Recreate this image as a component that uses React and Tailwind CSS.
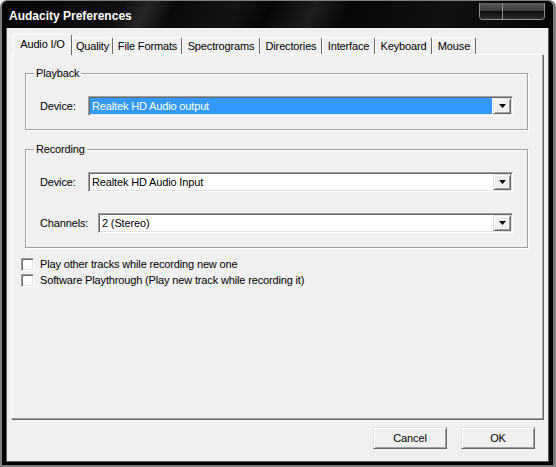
const tabs = [
  { label: 'Audio I/O', w: 'w-[59px]', active: true },
  { label: 'Quality', w: 'w-[41px]' },
  { label: 'File Formats', w: 'w-[69px]' },
  { label: 'Spectrograms', w: 'w-[78px]' },
  { label: 'Directories', w: 'w-[62px]' },
  { label: 'Interface', w: 'w-[53px]' },
  { label: 'Keyboard', w: 'w-[57px]' },
  { label: 'Mouse', w: 'w-[44px]' },
];

const sunken =
  'border border-t-[#a0a0a0] border-l-[#a0a0a0] border-r-white border-b-white shadow-[inset_1px_1px_0_#696969,inset_-1px_-1px_0_#e3e3e3]';
const raised =
  'border border-t-[#e3e3e3] border-l-[#e3e3e3] border-r-[#696969] border-b-[#696969] shadow-[inset_1px_1px_0_#fff,inset_-1px_-1px_0_#a0a0a0]';

const Combo = ({ value, selected }) => (
  <div className={`flex h-[20px] flex-1 bg-white p-px ${sunken}`}>
    <div
      className={`mr-px flex flex-1 items-center pl-[2px] leading-[13px] ${
        selected ? 'bg-[#3399ff] text-white' : ''
      }`}
    >
      {value}
    </div>
    <div className={`flex w-[18px] items-center justify-center bg-[#f0f0f0] ${raised}`}>
      <svg width="7" height="4" viewBox="0 0 7 4">
        <path d="M0 0h7L3.5 4z" fill="#000" />
      </svg>
    </div>
  </div>
);

const Group = ({ title, children, className = '' }) => (
  <fieldset
    className={`mx-0 border border-[#a0a0a0] p-0 shadow-[1px_1px_0_#fff,inset_1px_1px_0_#fff] ${className}`}
  >
    <legend className="ml-[8px] bg-[#f0f0f0] px-[2px] leading-[13px]">{title}</legend>
    {children}
  </fieldset>
);

const Check = ({ label }) => (
  <div className="flex h-[16px] items-center">
    <div className={`h-[13px] w-[13px] bg-white ${sunken}`} />
    <span className="ml-[6px] leading-[13px]">{label}</span>
  </div>
);

const DlgButton = ({ children }) => (
  <button className={`flex h-[22px] w-[74px] items-center justify-center bg-[#f0f0f0] leading-[13px] ${raised}`}>
    {children}
  </button>
);

export default function App() {
  return (
    <div className="h-[467px] w-[556px] rounded-t-[7px] bg-[#7d7d7d] pb-[2px] pl-[2px] pr-[3px] pt-px font-['Liberation_Sans',Arial,sans-serif] text-[11px] tracking-[-0.15px] text-black">
      <div className="flex h-full flex-col overflow-hidden rounded-t-[6px] bg-black">
        {/* Title bar */}
        <div className="flex h-[27px] shrink-0 items-start justify-between bg-[linear-gradient(115deg,#060606_0%,#101010_22%,#262626_26%,#0a0a0a_31%,#141414_42%,#050505_48%,#1d1d1d_56%,#070707_62%,#111_80%,#030303_100%)]">
          <div className="ml-[7px] mt-[8px] text-[12px] font-bold leading-[14px] tracking-normal text-white">
            Audacity Preferences
          </div>
          <div className="mr-[8px] mt-[2px] flex h-[17px] overflow-hidden rounded-b-[4px] border border-t-0 border-[#8e8e8e]">
            <div className="w-[23px] border-r border-[#8e8e8e] bg-[linear-gradient(#5c5c5c_0%,#3a3a3a_50%,#0c0c0c_52%,#2e2e2e_100%)]" />
            <div className="w-[41px] bg-[linear-gradient(#5c5c5c_0%,#3a3a3a_50%,#0c0c0c_52%,#2e2e2e_100%)]" />
          </div>
        </div>

        {/* Client area */}
        <div className="flex flex-1 flex-col px-[4px] pb-[3px]">
          <div className="flex flex-1 flex-col border-x border-b border-[#5c5c5c] bg-[#f0f0f0] pl-[4px] pr-[5px] pt-[6px]">
            {/* Tabs */}
            <div className="relative z-10 -mb-px flex h-[21px] items-end pl-[2px]">
              {tabs.map((t) =>
                t.active ? (
                  <div
                    key={t.label}
                    className={`${t.w} flex h-[21px] items-start justify-center rounded-t-[2px] border-l border-t border-r border-l-white border-t-white border-r-[#696969] bg-[#f0f0f0] pt-[3px] leading-[13px]`}
                  >
                    {t.label}
                  </div>
                ) : (
                  <div
                    key={t.label}
                    className={`${t.w} mb-px flex h-[17px] items-center justify-center rounded-t-[2px] border-l border-t border-r border-l-white border-t-white border-r-[#696969] pt-px leading-[13px]`}
                  >
                    {t.label}
                  </div>
                )
              )}
            </div>

            {/* Panel */}
            <div className="flex h-[365px] flex-col border border-l-white border-t-white border-r-[#a0a0a0] border-b-[#a0a0a0] shadow-[1px_1px_0_#696969]">
              <Group title="Playback" className="ml-[13px] mr-[14px] mt-[12px]">
                <div className="flex items-center pb-[13px] pl-[14px] pr-[14px] pt-[16px]">
                  <div className="w-[48px] leading-[13px]">Device:</div>
                  <Combo value="Realtek HD Audio output" selected />
                </div>
              </Group>

              <Group title="Recording" className="ml-[13px] mr-[14px] mt-[13px]">
                <div className="flex flex-col gap-[21px] pb-[14px] pl-[14px] pr-[14px] pt-[16px]">
                  <div className="flex items-center">
                    <div className="w-[48px] leading-[13px]">Device:</div>
                    <Combo value="Realtek HD Audio Input" />
                  </div>
                  <div className="flex items-center">
                    <div className="w-[58px] leading-[13px]">Channels:</div>
                    <Combo value="2 (Stereo)" />
                  </div>
                </div>
              </Group>

              <div className="ml-[9px] mt-[8px] flex flex-col">
                <Check label="Play other tracks while recording new one" />
                <Check label="Software Playthrough (Play new track while recording it)" />
              </div>
            </div>

            {/* Buttons */}
            <div className="mt-[8px] flex justify-end gap-[14px] pr-[8px]">
              <DlgButton>Cancel</DlgButton>
              <DlgButton>OK</DlgButton>
            </div>
          </div>
        </div>
      </div>
    </div>
  );
}
